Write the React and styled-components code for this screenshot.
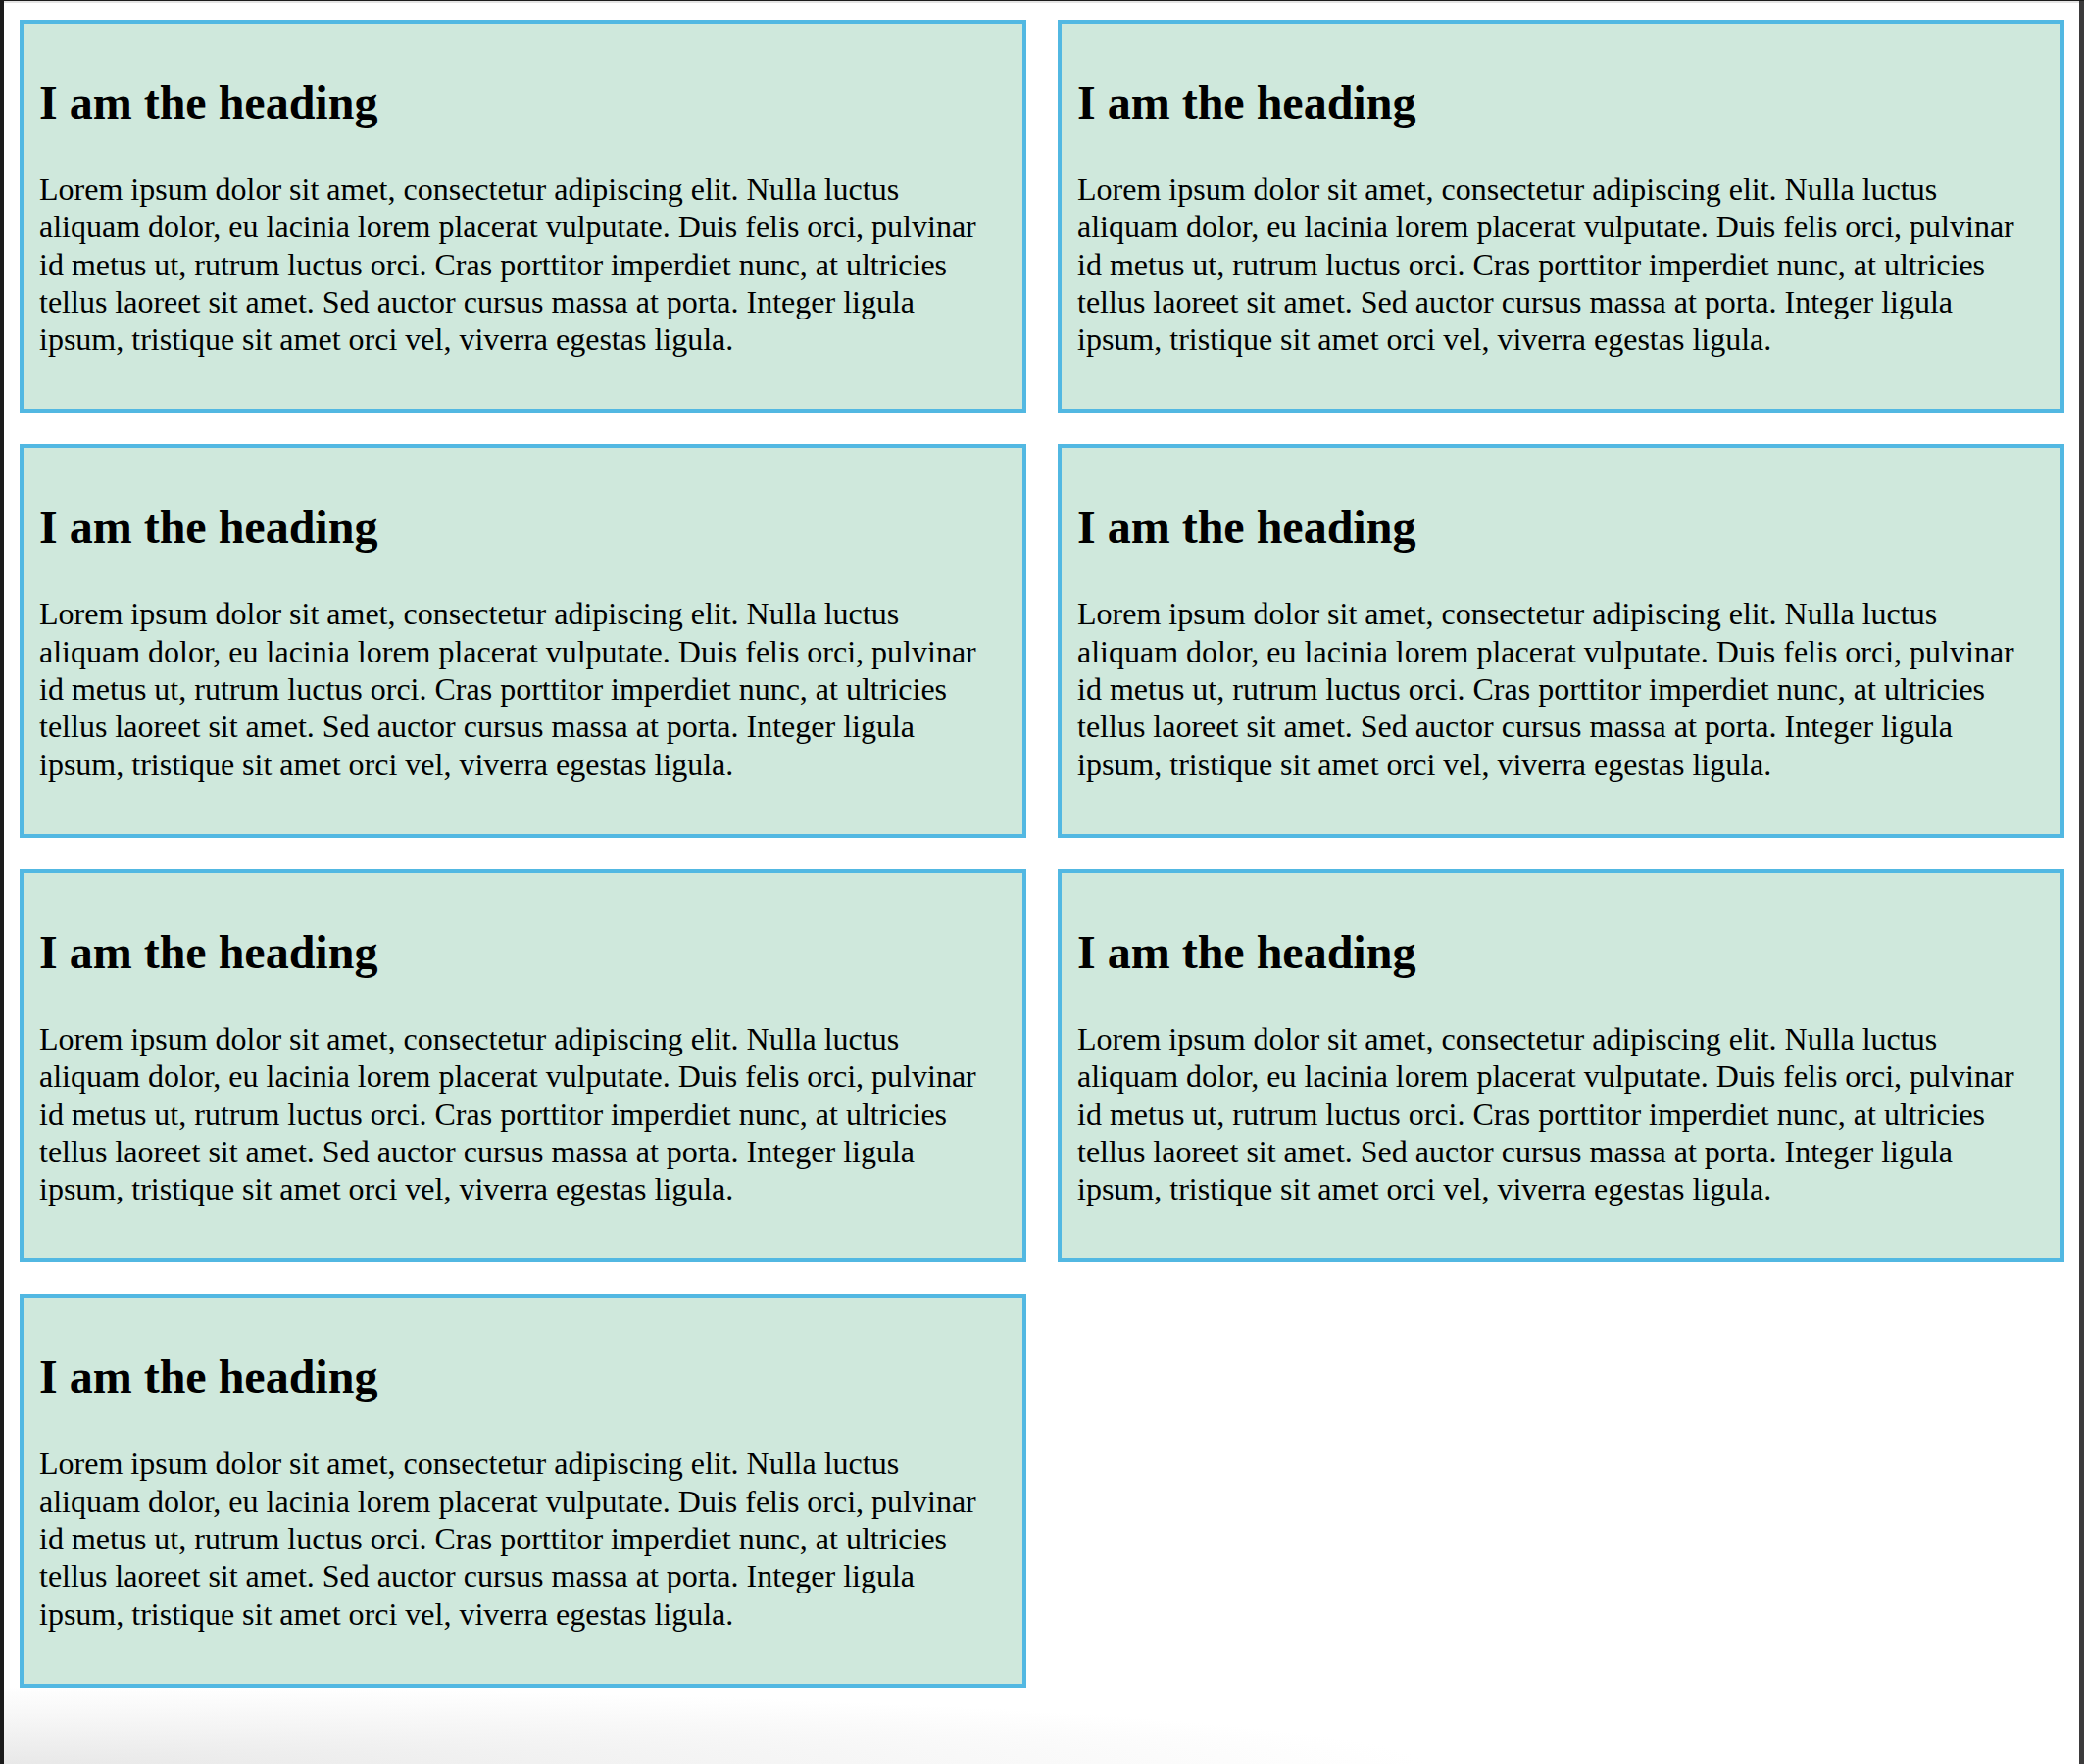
import React from "react";
import styled, { createGlobalStyle } from "styled-components";

const CARD_COUNT = 7;

const BODY_TEXT =
  "Lorem ipsum dolor sit amet, consectetur adipiscing elit. Nulla luctus aliquam dolor, eu lacinia lorem placerat vulputate. Duis felis orci, pulvinar id metus ut, rutrum luctus orci. Cras porttitor imperdiet nunc, at ultricies tellus laoreet sit amet. Sed auctor cursus massa at porta. Integer ligula ipsum, tristique sit amet orci vel, viverra egestas ligula.";

const GlobalStyle = createGlobalStyle`
  html, body {
    margin: 0;
    padding: 0;
    background: #1c1c1c;
  }
  body {
    font-family: "Liberation Serif", "Times New Roman", serif;
    color: #000;
  }
`;

const App = () => {
  const cards = Array.from({ length: CARD_COUNT }, (_, i) => i);

  return (
    <>
      <GlobalStyle />
      <Frame>
        <TopLine />
        <Page>
          <Grid>
            {cards.map((i) => (
              <Card key={i}>
                <Heading>I am the heading</Heading>
                <Text>{BODY_TEXT}</Text>
              </Card>
            ))}
          </Grid>
        </Page>
      </Frame>
    </>
  );
};

export default App;

const Frame = styled.div`
  min-height: 1800px;
  border-left: 4px solid #1b1b1b;
  border-right: 5px solid #3b3a3b;
  background-color: #fff;
  background-image: radial-gradient(
    ellipse 1450px 80px at 0 100%,
    #e8e8e8 0%,
    #f4f4f4 50%,
    rgba(255, 255, 255, 0) 100%
  );
  box-sizing: border-box;
`;

const TopLine = styled.div`
  height: 2px;
  margin-top: 1px;
  background: #e4e4e4;
`;

const Page = styled.main`
  padding: 17px 15px 0 16px;
`;

const Grid = styled.div`
  display: grid;
  grid-template-columns: 1fr 1fr;
  gap: 32px;
  align-items: start;
`;

const Card = styled.section`
  border: 4px solid #52b8e2;
  background: #cfe8dc;
  padding: 0 16px;
`;

const Heading = styled.h2`
  margin: 51px 0 39px;
  font-size: 48px;
  line-height: 60px;
  font-weight: bold;
`;

const Text = styled.p`
  margin: 0 0 52px;
  font-size: 32px;
  line-height: 38.3px;
`;
